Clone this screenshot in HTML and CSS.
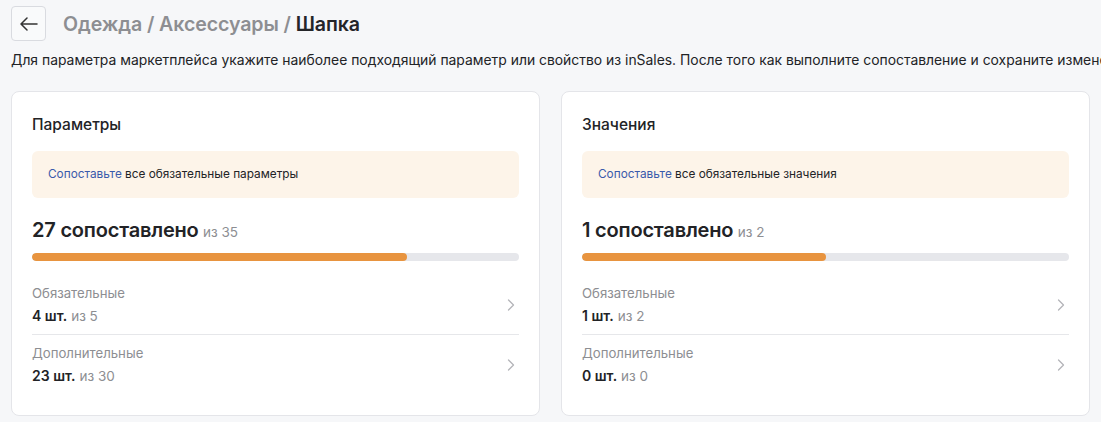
FILE: index.html
```html
<!DOCTYPE html>
<html lang="ru">
<head>
<meta charset="utf-8">
<title>Шапка</title>
<link rel="stylesheet" href="styles.css">
</head>
<body>
<div class="page">
  <header class="top">
    <button class="back" aria-label="Назад">
      <svg width="18" height="14" viewBox="0 0 18 14" fill="none" stroke="#333" stroke-width="1.5" stroke-linecap="round" stroke-linejoin="round"><path d="M17 7H1.5M7 1L1 7l6 6"/></svg>
    </button>
    <h1 class="crumbs"><span class="muted">Одежда / Аксессуары / </span>Шапка</h1>
  </header>
  <p class="desc">Для параметра маркетплейса укажите наиболее подходящий параметр или свойство из inSales. После того как выполните сопоставление и сохраните изменения</p>
  <div class="cards">
    <section class="card">
      <h2 class="card-title">Параметры</h2>
      <div class="alert"><span class="link">Сопоставьте</span> все обязательные параметры</div>
      <div class="total"><span class="big">27 сопоставлено</span> <span class="of">из 35</span></div>
      <div class="bar"><div class="fill" style="width:77.1%"></div></div>
      <div class="row">
        <div class="row-text">
          <div class="label">Обязательные</div>
          <div class="value"><b>4 шт.</b> <span class="of">из 5</span></div>
        </div>
        <svg class="chev" width="8" height="12" viewBox="0 0 8 12" fill="none" stroke="#b4b5b9" stroke-width="1.3" stroke-linecap="round" stroke-linejoin="round"><path d="M1.5 1l5 5-5 5"/></svg>
      </div>
      <div class="row">
        <div class="row-text">
          <div class="label">Дополнительные</div>
          <div class="value"><b>23 шт.</b> <span class="of">из 30</span></div>
        </div>
        <svg class="chev" width="8" height="12" viewBox="0 0 8 12" fill="none" stroke="#b4b5b9" stroke-width="1.3" stroke-linecap="round" stroke-linejoin="round"><path d="M1.5 1l5 5-5 5"/></svg>
      </div>
    </section>
    <section class="card">
      <h2 class="card-title">Значения</h2>
      <div class="alert"><span class="link">Сопоставьте</span> все обязательные значения</div>
      <div class="total"><span class="big">1 сопоставлено</span> <span class="of">из 2</span></div>
      <div class="bar"><div class="fill" style="width:50%"></div></div>
      <div class="row">
        <div class="row-text">
          <div class="label">Обязательные</div>
          <div class="value"><b>1 шт.</b> <span class="of">из 2</span></div>
        </div>
        <svg class="chev" width="8" height="12" viewBox="0 0 8 12" fill="none" stroke="#b4b5b9" stroke-width="1.3" stroke-linecap="round" stroke-linejoin="round"><path d="M1.5 1l5 5-5 5"/></svg>
      </div>
      <div class="row">
        <div class="row-text">
          <div class="label">Дополнительные</div>
          <div class="value"><b>0 шт.</b> <span class="of">из 0</span></div>
        </div>
        <svg class="chev" width="8" height="12" viewBox="0 0 8 12" fill="none" stroke="#b4b5b9" stroke-width="1.3" stroke-linecap="round" stroke-linejoin="round"><path d="M1.5 1l5 5-5 5"/></svg>
      </div>
    </section>
  </div>
</div>
</body>
</html>
```
FILE: styles.css
```css
* { box-sizing: border-box; }
html, body { margin: 0; padding: 0; overflow: hidden; }
body {
  background: #f6f7f9;
  font-family: Inter, "Noto Sans", sans-serif;
  color: #222326;
}
.page { padding: 6px 11px 0; }
.top { display: flex; align-items: center; gap: 17px; height: 35px; }
.back {
  width: 35px; height: 35px; padding: 0;
  display: flex; align-items: center; justify-content: center;
  background: #f9fafb; border: 1px solid #d9dbe0; border-radius: 4px;
}
.crumbs { margin: 0; font-size: 19.6px; font-weight: 600; color: #242529; letter-spacing: -0.1px; }
.muted { color: #8d8e92; }
.desc {
  margin: 10px 0 0; font-size: 13.9px; line-height: 18px;
  white-space: nowrap; color: #222326;
}
.cards { display: grid; grid-template-columns: 1fr 1fr; gap: 21px; margin-top: 22px; }
.card {
  background: #fff; border: 1px solid #e4e5e9; border-radius: 8px;
  padding: 23px 20px 21px;
}
.card-title { margin: 0; font-size: 15.5px; font-weight: 500; line-height: 20px; }
.alert {
  margin-top: 16px; background: #fdf4e9; border-radius: 6px;
  padding: 16px 16px; font-size: 11.8px; line-height: 15px; color: #222326;
}
.link { color: #3a5aab; }
.total { margin-top: 20px; line-height: 24px; }
.big { font-size: 20px; font-weight: 600; letter-spacing: -0.2px; }
.of { color: #8d8e92; font-size: 13.5px; font-weight: 400; }
.bar { margin-top: 9px; margin-bottom: 13px; height: 8px; border-radius: 4px; background: #e6e7eb; overflow: hidden; }
.fill { height: 100%; background: #e8943f; border-radius: 4px; }
.row { display: flex; align-items: center; justify-content: space-between; padding: 10px 0 8px; }
.row + .row { border-top: 1px solid #e6e7ea; padding-top: 9px; }
.label { font-size: 13.2px; line-height: 18px; color: #8d8e92; }
.value { margin-top: 4px; font-size: 14px; line-height: 20px; }
.value b { font-weight: 600; }
.chev { margin-right: 4px; }
```
